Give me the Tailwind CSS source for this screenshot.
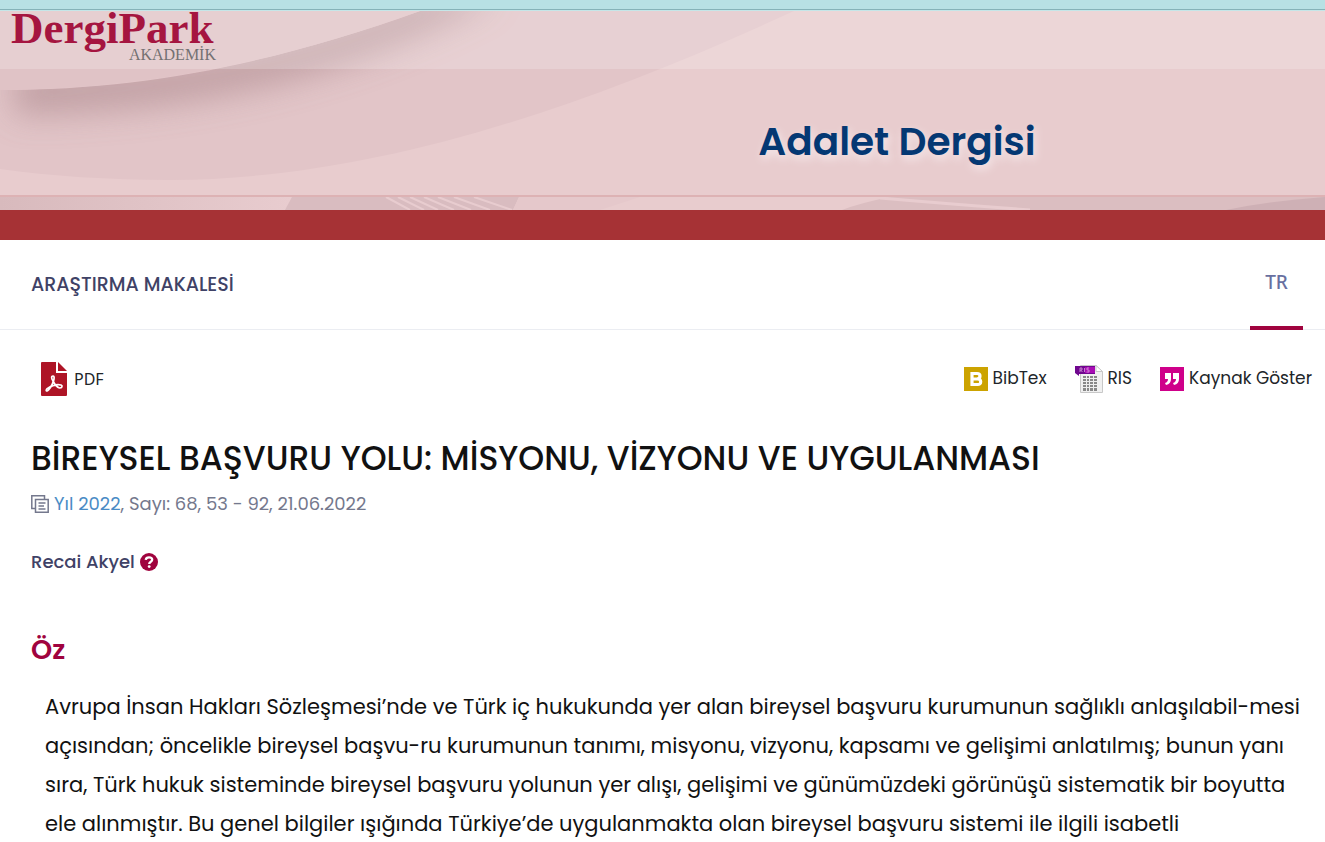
<!DOCTYPE html>
<html lang="tr">
<head>
  <meta charset="UTF-8" />
  <meta name="viewport" content="width=device-width, initial-scale=1" />
  <title>DergiPark - Adalet Dergisi</title>
  <script src="https://cdn.jsdelivr.net/npm/@tailwindcss/browser@4"></script>
</head>
<body class="bg-white font-[Poppins,Inter,sans-serif] text-[#212529] overflow-x-hidden">
  <!-- Top strip -->
  <div class="h-[10px] bg-[#b8e1e4] border-b border-[#86b3b8]"></div>
  <div class="h-px bg-[#c5e6e8]"></div>

  <!-- Journal banner -->
  <header class="relative h-[199px] bg-[#e8ccce] overflow-hidden">
    <svg class="absolute inset-0 w-full h-full" viewBox="0 0 1325 199" preserveAspectRatio="none" aria-hidden="true">
      <defs>
        <clipPath id="under"><path d="M0 79 C150 79 280 50 420 0 H800 C560 110 360 168 170 169 C110 169 50 165 0 158z" /></clipPath>
        <filter id="soft" x="-20%" y="-50%" width="140%" height="200%"><feGaussianBlur stdDeviation="16" /></filter>
        <linearGradient id="left" x1="0" x2="1"><stop offset="0" stop-color="#d8babd" /><stop offset="1" stop-color="#e8cccf" /></linearGradient>
      </defs>
      <path fill="#e2c5c8" d="M0 0H794C560 108 360 168 170 169C110 169 50 165 0 158z" />
      <g clip-path="url(#under)">
        <path fill="#bb9a9e" opacity=".85" filter="url(#soft)" d="M14 58C150 66 290 41 420 -16L500 -16C350 70 180 102 14 104z" />
      </g>
      <path fill="#e0c3c6" d="M0 0H420C280 50 150 78 0 79z" />
      <path fill="#fff" opacity=".2" d="M0 0H1325V58H0z" />
      <!-- lower strip artwork -->
      <path fill="url(#left)" d="M0 186H292L285 199H0z" />
      <path fill="#d9bcc0" d="M292 186H519L513 199H285z" />
      <path fill="#e5c8cb" d="M519 186H640L600 199H513z" />
      <path stroke="#e8cccf" stroke-width="2" d="M386 186l24 13M398 186l26 13M410 186l28 13M424 186l30 13M438 186l33 13M454 186l36 13M474 186l38 13" />
      <path fill="#dbbec1" d="M842 199Q860 192 890 186H1325V199z" />
      <path fill="#ceb0b5" d="M1226 199Q1270 190 1325 186V199z" />
      <path fill="none" stroke="#e8cccf" stroke-width="3" d="M880 187Q950 193 1030 199" />
      <path fill="#ddb2b4" d="M0 184H1325V186H0z" />
    </svg>
    <div class="relative h-[58px]">
      <a href="#" class="flex w-[216px] flex-col pl-[11px] font-[Liberation_Serif,serif]">
        <span class="-mt-2 h-[40px] text-[45px] leading-[50px] font-bold text-[#a51540]">DergiPark</span>
        <span class="text-right text-[16px] leading-[24px] text-[#747172]">AKADEMİK</span>
      </a>
    </div>
    <div class="relative flex h-[126px] items-center pt-5">
      <div class="w-[469px] shrink-0"></div>
      <h1 class="flex-1 text-center text-[39px] leading-[48px] font-semibold text-[#043873] [text-shadow:2px_4px_8px_#f6eaec]">Adalet Dergisi</h1>
    </div>
  </header>
  <div class="h-[30px] bg-[#a63235]"></div>

  <!-- Article type and language tab -->
  <nav class="flex h-[90px] justify-between border-b border-[#ebedf2] pl-[31px] pr-[22px]">
    <h2 class="self-center text-[19px] leading-[28px] font-medium text-[#3f4266]">ARAŞTIRMA MAKALESİ</h2>
    <a href="#" class="flex h-[90px] w-[53px] justify-center border-b-4 border-[#a0033e] pt-[28px] font-[Noto_Sans,sans-serif] text-[19px] leading-[28px] font-medium text-[#6870a0]">TR</a>
  </nav>

  <main class="pl-[31px] pr-[13px]">
    <!-- Downloads and citation links -->
    <div class="flex h-[97px] items-center pl-[10px] text-[17px]">
      <a href="#" class="flex items-center gap-[7px] font-[Noto_Sans,sans-serif] text-[16px]">
        <svg class="h-[34px] w-[26px]" viewBox="0 0 26 34" aria-hidden="true">
          <path fill="#ae1426" d="M1 0H15V11H26V33Q26 34 25 34H1Q0 34 0 33V1Q0 0 1 0z" />
          <path fill="#ae1426" d="M17 0L26 9H17z" />
          <path fill="none" stroke="#fff" stroke-width="1.7" stroke-linejoin="round" d="M12 14C10 14 10.500 17 12 19C13.500 22 15.500 25 18.500 26C21 26 22 24 20 23C15 22 10 24 6.500 26.500C4 28.500 5.500 30 7.500 28C10 25 12.500 20 13 17C13.300 15 13 14 12 14z" />
        </svg>
        PDF
      </a>
      <div class="ml-auto flex items-center gap-7">
        <a href="#" class="flex items-center gap-[5px]">
          <svg class="size-6" viewBox="0 0 24 24" aria-hidden="true">
            <path fill="#cca300" d="M0 0H24V24H0z" />
            <path fill="none" stroke="#fff" stroke-width="3.200" d="M8 6.500H13Q16 6.500 16 9T13 12H8H13.500Q16.700 12 16.700 14.800T13.500 17.500H8M8 5V19" />
          </svg>
          BibTex
        </a>
        <a href="#" class="flex items-center gap-[5px]">
          <svg class="h-[30px] w-[28px]" viewBox="0 0 28 30" aria-hidden="true">
            <path fill="#f0f0f0" stroke="#c8c8c8" d="M5.500 1.500H21L27.500 7.500V28.500H5.500z" />
            <path fill="#fff" stroke="#c8c8c8" d="M21 1.500V7.500H27.500z" />
            <path fill="#888" d="M8 12H22V27H8z" />
            <path stroke="#eee" d="M8 14.500H22M8 17.500H22M8 20.500H22M8 23.500H22M11.500 12V27M14.500 12V27M18.500 12V27" />
            <path fill="#70078f" d="M0 2H20V10H4V12L0 9z" />
            <path fill="#a90cb4" d="M10 3H20V9H10z" />
            <path fill="none" stroke="#d9a0df" stroke-width=".8" d="M5 8V4H7V6H5.500L7.500 8M9.500 4V8M14 4H12V6H14V8H11.500" />
          </svg>
          RIS
        </a>
        <a href="#" class="flex items-center gap-[5px]">
          <svg class="size-6" viewBox="0 0 24 24" aria-hidden="true">
            <path fill="#cf008a" d="M0 0H24V24H0z" />
            <path fill="#fff" d="M5 6H11V12Q11 17 6 18L5 16Q8 15 8 12H5zM13 6H19V12Q19 17 14 18L13 16Q16 15 16 12H13z" />
          </svg>
          Kaynak Göster
        </a>
      </div>
    </div>

    <!-- Article heading -->
    <h3 class="pt-2 text-[33px] leading-[48px] font-medium text-[#111]">BİREYSEL BAŞVURU YOLU: MİSYONU, VİZYONU VE UYGULANMASI</h3>
    <p class="mt-[7px] flex items-center gap-[5px] text-[18px] leading-[28px] text-[#74788d]">
      <svg class="size-[18px]" viewBox="0 0 18 18" fill="none" stroke="#74788d" stroke-width="1.500" aria-hidden="true">
        <path d="M4 13.500H.8V.8H13.500V4M4.500 4.500H17.200V17.200H4.500zM7.500 8H14.500M7.500 11H13M7.500 14H14.500" />
      </svg>
      <span><a href="#" class="text-[#4a8bc5]">Yıl 2022</a>, Sayı: 68, 53 - 92, 21.06.2022</span>
    </p>
    <p class="mt-[30px] flex items-center gap-[5px] text-[18px] leading-[28px] font-medium text-[#3f4266]">
      Recai Akyel
      <svg class="size-[18px]" viewBox="0 0 18 18" aria-hidden="true">
        <circle cx="9" cy="9" r="9" fill="#a0033e" />
        <path fill="none" stroke="#fff" stroke-width="2.300" d="M5.700 6.800C6 4.800 7.300 4.300 9 4.300C11 4.300 12.200 5.300 12.200 6.800C12.200 8.800 9.200 8.700 9.200 11" />
        <circle cx="9.200" cy="13.600" r="1.400" fill="#fff" />
      </svg>
    </p>

    <!-- Abstract -->
    <h3 class="mt-[55px] text-[27px] leading-[38px] font-semibold text-[#a0033e]">Öz</h3>
    <p class="mt-[18px] pl-[14px] text-[21px] leading-[39px] text-[#111]">
      Avrupa İnsan Hakları Sözleşmesi’nde ve Türk iç hukukunda yer alan bireysel başvuru kurumunun sağlıklı anlaşılabil-mesi açısından; öncelikle bireysel başvu-ru kurumunun tanımı, misyonu, vizyonu, kapsamı ve gelişimi anlatılmış; bunun yanı sıra, Türk hukuk sisteminde bireysel başvuru yolunun yer alışı, gelişimi ve günümüzdeki görünüşü sistematik bir boyutta ele alınmıştır. Bu genel bilgiler ışığında Türkiye’de uygulanmakta olan bireysel başvuru sistemi ile ilgili isabetli
    </p>
  </main>
</body>
</html>
